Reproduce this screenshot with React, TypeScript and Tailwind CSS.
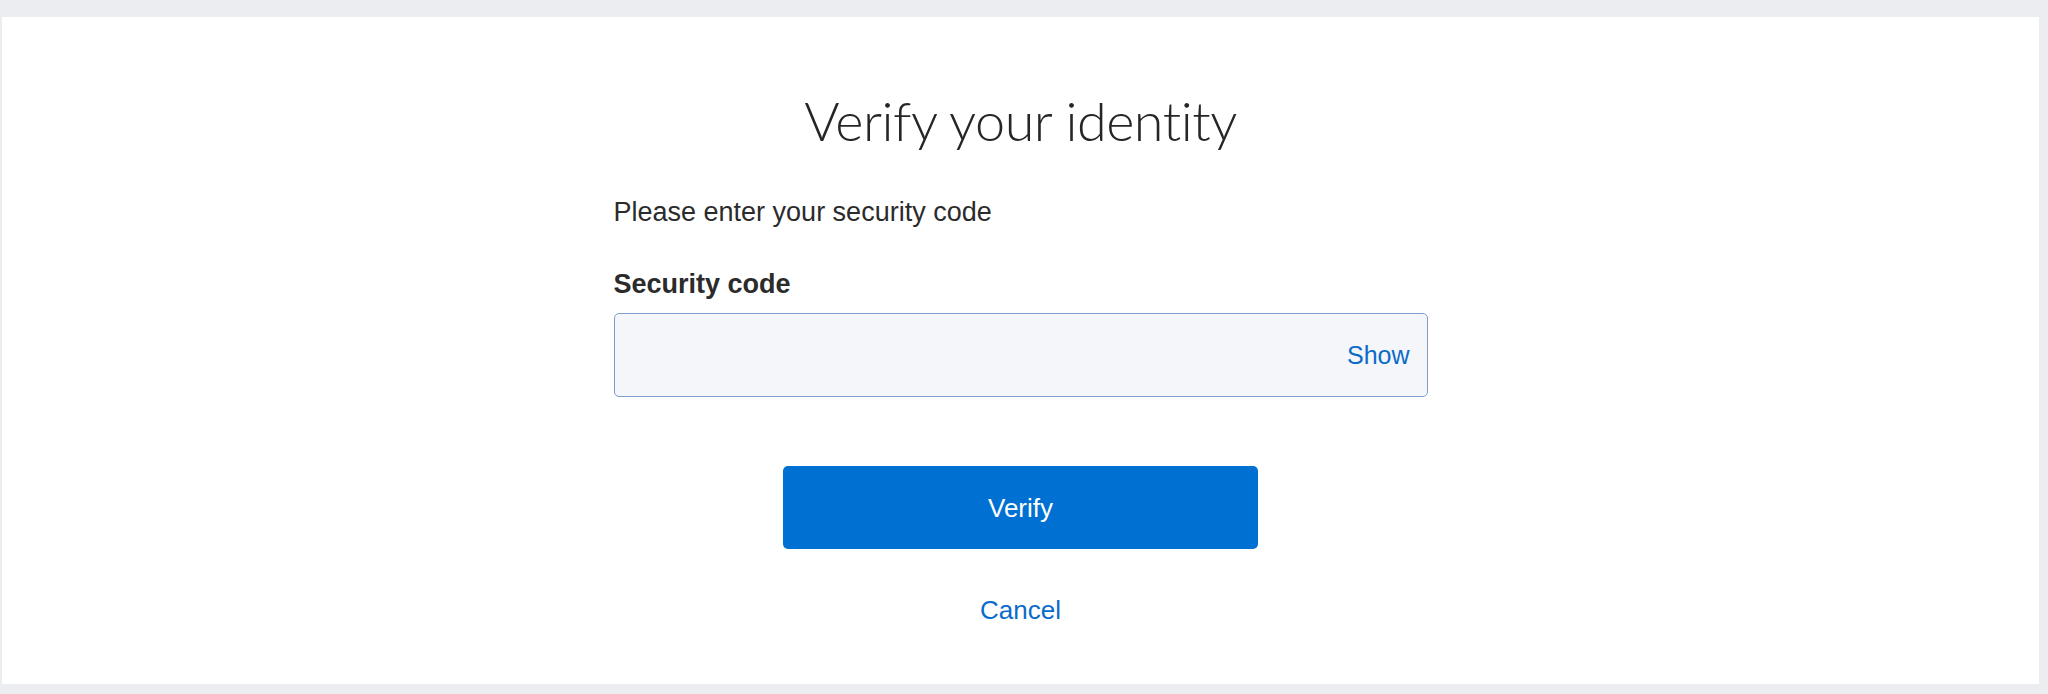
import React from "react";

export default function App() {
  return (
    <div className="w-[2048px] h-[694px] bg-[#ebedf0] pt-[17px] pl-[2px] pr-[9px] pb-[10px]">
      <div className="bg-white w-full h-full flex flex-col items-center pt-[72px]">
        <h1
          className="text-[54px] leading-[64px] font-light text-[#262626] tracking-[-0.5px]"
          style={{ fontFamily: "Lato, 'Open Sans', sans-serif" }}
        >
          Verify your identity
        </h1>
        <div
          className="w-[814px] flex flex-col text-[#2b2b2b]"
          style={{ fontFamily: "'Liberation Sans', Arial, sans-serif" }}
        >
          <p className="mt-[43px] text-[27px] leading-[32px]">Please enter your security code</p>
          <label className="mt-[40px] text-[27px] leading-[32px] font-bold">Security code</label>
          <div className="mt-[13px] h-[84px] rounded-[5px] border border-[#7e9ccc] bg-[#f4f6f9] flex items-center justify-end pr-[17px]">
            <span className="text-[25px] leading-[30px] text-[#0b6bcb]">Show</span>
          </div>
          <div className="flex flex-col items-center">
            <button className="mt-[69px] w-[475px] h-[83px] rounded-[5px] bg-[#0070d2] text-white text-[26px] leading-[32px]">
              Verify
            </button>
            <span className="mt-[45px] text-[26px] leading-[32px] text-[#0b6bcb]">Cancel</span>
          </div>
        </div>
      </div>
    </div>
  );
}
